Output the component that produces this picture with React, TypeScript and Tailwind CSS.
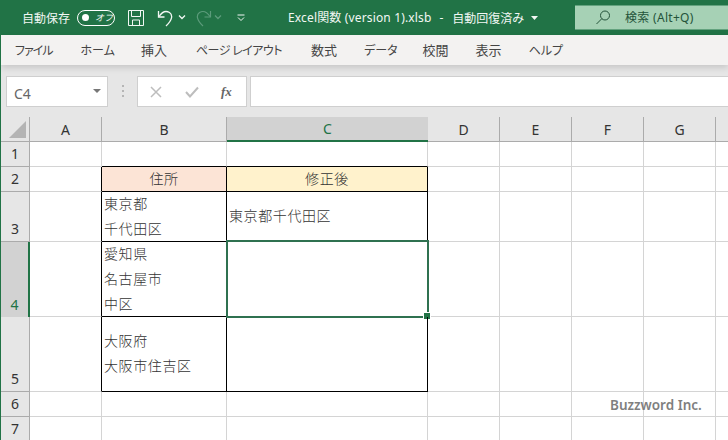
import React from "react";

const FONT = '"Noto Sans", "Noto Sans CJK JP", sans-serif';
const CJK = '"Noto Sans CJK JP", sans-serif';
const TRACKS = "grid-cols-[29px_72px_125px_201px_72px_72px_72px_72px_72px]";

const cols = ["A", "B", "C", "D", "E", "F", "G", ""];
const rows = [
  { n: "1", h: "h-[25px]" },
  { n: "2", h: "h-[25px]" },
  { n: "3", h: "h-[50px]" },
  { n: "4", h: "h-[75px]" },
  { n: "5", h: "h-[75px]" },
  { n: "6", h: "h-[25px]" },
  { n: "7", h: "h-[25px]" },
];

function Caret({ className }: { className: string }) {
  return (
    <svg width="8" height="5" viewBox="0 0 8 5" className={className}>
      <path d="M1 0.5 L4 3.5 L7 0.5" fill="none" stroke="currentColor" strokeWidth="1.3" />
    </svg>
  );
}

function TitleBar() {
  return (
    <div className="flex h-[35px] items-center bg-[#217346] text-[#f2f7f4]">
      <span className="ml-[21px] w-[50px] whitespace-nowrap text-[12px]" style={{ fontFamily: CJK }}>自動保存</span>
      <div className="ml-[5px] flex h-[16px] w-[38px] items-center rounded-full border border-white pl-[4px]">
        <span className="h-[7px] w-[7px] rounded-full bg-white" />
        <span className="ml-[6px] text-[9px] italic leading-none" style={{ fontFamily: CJK }}>オフ</span>
      </div>
      <svg width="18" height="18" viewBox="0 0 18 18" className="ml-[12px]" fill="none" stroke="#f2f7f4" strokeWidth="1">
        <path d="M1.5 1.5 H16.5 V16.5 H1.5 Z" />
        <path d="M4.5 1.5 V7.5 H13.5 V1.5" />
        <path d="M5.5 16.5 V11 H12.5 V16.5" />
      </svg>
      <svg width="18" height="18" viewBox="0 0 18 18" className="ml-[12px]" fill="none" stroke="#f2f7f4" strokeWidth="1.3">
        <path d="M1.5 2 V8 H7.5" />
        <path d="M2 7.5 C5 3 9 1.5 12.5 3.5 C16 6 15.5 11 9 17" />
      </svg>
      <Caret className="ml-[3px] text-[#f2f7f4]" />
      <svg width="18" height="18" viewBox="0 0 18 18" className="ml-[8px]" fill="none" stroke="#5c9b7b" strokeWidth="1.2">
        <path d="M16.5 2 V8 H10.5" />
        <path d="M16 7.5 C13 3 9 1.5 5.5 3.5 C2 6 2.5 11 9 17" />
      </svg>
      <Caret className="ml-[2px] text-[#5c9b7b]" />
      <svg width="8" height="8" viewBox="0 0 8 8" className="ml-[15px]" fill="none" stroke="#f2f7f4" strokeWidth="1">
        <path d="M0.5 1 H7.5" />
        <path d="M1 3.5 L4 6.5 L7 3.5" />
      </svg>
      <span className="ml-[43px] whitespace-nowrap text-[12px] tracking-[0.15px]" style={{ fontFamily: FONT }}>Excel関数 (version 1).xlsb</span>
      <span className="ml-[8px] text-[12px]" style={{ fontFamily: FONT }}>-</span>
      <span className="ml-[9px] whitespace-nowrap text-[12px]" style={{ fontFamily: CJK }}>自動回復済み</span>
      <svg width="7" height="4" viewBox="0 0 7 4" className="ml-[7px]"><path d="M0 0 H7 L3.5 4 Z" fill="#f2f7f4" /></svg>
      <div className="ml-[auto] flex h-[24px] w-[153px] -translate-y-[0.5px] items-center bg-[#a6d1b5] text-[#24533a]">
        <svg width="16" height="16" viewBox="0 0 16 16" className="ml-[20px]" fill="none" stroke="#24533a" strokeWidth="1">
          <circle cx="10" cy="6" r="4.5" />
          <path d="M6.8 9.2 L1.5 14.5" />
        </svg>
        <span className="ml-[14px] whitespace-nowrap text-[12px] tracking-[0.3px]" style={{ fontFamily: FONT }}>検索 (Alt+Q)</span>
      </div>
    </div>
  );
}

function Tabs() {
  const tabs: [string, string][] = [
    ["ファイル", "ml-[14px] text-[12px] tracking-[-1px]"],
    ["ホーム", "ml-[28px] text-[12px]"],
    ["挿入", "ml-[26px] text-[13px]"],
    ["ページ レイアウト", "ml-[29px] text-[12px] tracking-[-0.5px]"],
    ["数式", "ml-[29px] text-[13px]"],
    ["データ", "ml-[27px] text-[12px]"],
    ["校閲", "ml-[25px] text-[13px]"],
    ["表示", "ml-[27px] text-[13px]"],
    ["ヘルプ", "ml-[27px] text-[12px]"],
  ];
  return (
    <div className="relative z-10 flex h-[30px] items-center bg-[#f3f2f1] text-[#444444] [font-feature-settings:'palt'] shadow-[0_3px_6px_rgba(0,0,0,0.13)]" style={{ fontFamily: CJK }}>
      {tabs.map(([t, c]) => (
        <span key={t} className={`${c} whitespace-nowrap`}>{t}</span>
      ))}
    </div>
  );
}

function FormulaBar() {
  return (
    <div className="flex h-[52px] items-start bg-[#e6e6e6] pl-[5px] pt-[11px]">
      <div className="flex h-[31px] w-[102px] items-center justify-between border border-[#cfcfcf] bg-white pl-[7px] pr-[6px] pt-[3px] text-[14px] text-[#666666]" style={{ fontFamily: FONT }}>
        C4
        <svg width="8" height="4" viewBox="0 0 8 4" className="-translate-y-[2px]"><path d="M0 0 H8 L4 4 Z" fill="#777777" /></svg>
      </div>
      <div className="ml-[14px] mt-[9px] flex w-[2px] flex-col gap-[3px]">
        <span className="h-[2px] bg-[#b5b5b5]" />
        <span className="h-[2px] bg-[#b5b5b5]" />
        <span className="h-[2px] bg-[#b5b5b5]" />
      </div>
      <div className="ml-[13px] flex h-[31px] w-[110px] items-center border border-[#cfcfcf] bg-white">
        <svg width="12" height="12" viewBox="0 0 12 12" className="ml-[12px]" fill="none" stroke="#bdbdbd" strokeWidth="1.5">
          <path d="M1 1 L11 11 M11 1 L1 11" />
        </svg>
        <svg width="14" height="12" viewBox="0 0 14 12" className="ml-[23px]" fill="none" stroke="#bdbdbd" strokeWidth="2">
          <path d="M1 6 L5 10.5 L13 1.5" />
        </svg>
        <span className="ml-[22px] text-[13px] font-bold italic leading-none text-[#666666]" style={{ fontFamily: '"Liberation Serif", serif' }}>fx</span>
      </div>
      <div className="ml-[3px] h-[31px] flex-1 border-y border-l border-[#cfcfcf] bg-white" />
    </div>
  );
}

function ColHeader() {
  return (
    <div className={`grid h-[25px] ${TRACKS} bg-[#e6e6e6]`} style={{ fontFamily: FONT }}>
      <div className="flex items-end justify-end border-r border-b border-[#ababab] pb-[3px] pr-[3px]">
        <svg width="17" height="17" viewBox="0 0 17 17"><path d="M17 0 V17 H0 Z" fill="#b4b4b4" /></svg>
      </div>
      {cols.map((c) =>
        c === "C" ? (
          <div key="C" className="flex items-center justify-center border-b-2 border-[#217346] bg-[#d2d2d2] text-[14px] text-[#217346]">C</div>
        ) : (
          <div key={c || "H"} className="flex items-center justify-center border-r border-b border-[#ababab] text-[14px] text-[#333333]">{c}</div>
        ),
      )}
    </div>
  );
}

function Lines({ items, className }: { items: string[]; className: string }) {
  return (
    <div className={`flex h-full -translate-y-[1.5px] flex-col pl-[2px] ${className}`}>
      {items.map((t) => (
        <div key={t} className="flex h-[25px] shrink-0 items-center whitespace-nowrap">{t}</div>
      ))}
    </div>
  );
}

function Sheet() {
  const line = "border-r border-b border-[#d4d4d4]";
  const black = "border-r border-b border-black";
  return (
    <div className={`relative grid ${TRACKS} text-[14px] font-light tracking-[0.6px] text-[#333333]`} style={{ fontFamily: CJK }}>
      {rows.map((r) => {
        const i = r.n;
        const isTable = i === "2" || i === "3" || i === "4" || i === "5";
        return (
          <React.Fragment key={i}>
            <div className={`${r.h} flex items-end justify-center pb-[2px] text-[14px] font-normal tracking-normal ${i === "4" ? "border-r-2 border-r-[#217346] bg-[#d2d2d2] text-[#217346]" : "border-r border-b border-[#ababab] bg-[#e6e6e6] text-[#333333]"}`} style={{ fontFamily: FONT }}>
              {i}
            </div>
            <div className={`${r.h} ${isTable ? "border-r border-r-black border-b border-b-[#d4d4d4]" : line}`} />
            <div className={`${r.h} ${i === "1" ? "border-r border-r-[#d4d4d4] border-b border-b-black" : i === "6" || i === "7" ? line : black} ${i === "2" ? "bg-[#fce4d6] text-center leading-[23px]" : ""}`}>
              {i === "2" && "住所"}
              {i === "3" && <Lines items={["東京都", "千代田区"]} className="" />}
              {i === "4" && <Lines items={["愛知県", "名古屋市", "中区"]} className="" />}
              {i === "5" && <Lines items={["大阪府", "大阪市住吉区"]} className="pt-[12px]" />}
            </div>
            <div className={`${r.h} relative ${i === "1" ? "border-r border-r-[#d4d4d4] border-b border-b-black" : i === "6" || i === "7" ? line : black} ${i === "2" ? "bg-[#fff2cc] text-center leading-[23px]" : ""} ${i === "3" ? "flex items-center pb-[3px] pl-[2px]" : ""}`}>
              {i === "2" && "修正後"}
              {i === "3" && "東京都千代田区"}
              {i === "4" && (
                <>
                  <div className="absolute -left-[1px] -top-[2px] h-[78px] w-[203px] border-2 border-[#2f7150]" />
                  <div className="absolute -bottom-[3px] -right-[3px] h-[6px] w-[6px] bg-[#217346] outline outline-1 outline-white" />
                </>
              )}
            </div>
            {[0, 1, 2, 3, 4].map((k) => (
              <div key={k} className={`${r.h} ${line}`} />
            ))}
          </React.Fragment>
        );
      })}
      <span className="absolute left-[609px] top-[253px] whitespace-nowrap text-[13.5px] font-semibold tracking-normal text-[#7f7f7f]" style={{ fontFamily: FONT }}>Buzzword Inc.</span>
    </div>
  );
}

export default function App() {
  return (
    <div className="h-[440px] w-[728px] overflow-hidden border-l border-l-[#217346] bg-white">
      <TitleBar />
      <Tabs />
      <FormulaBar />
      <ColHeader />
      <Sheet />
    </div>
  );
}
